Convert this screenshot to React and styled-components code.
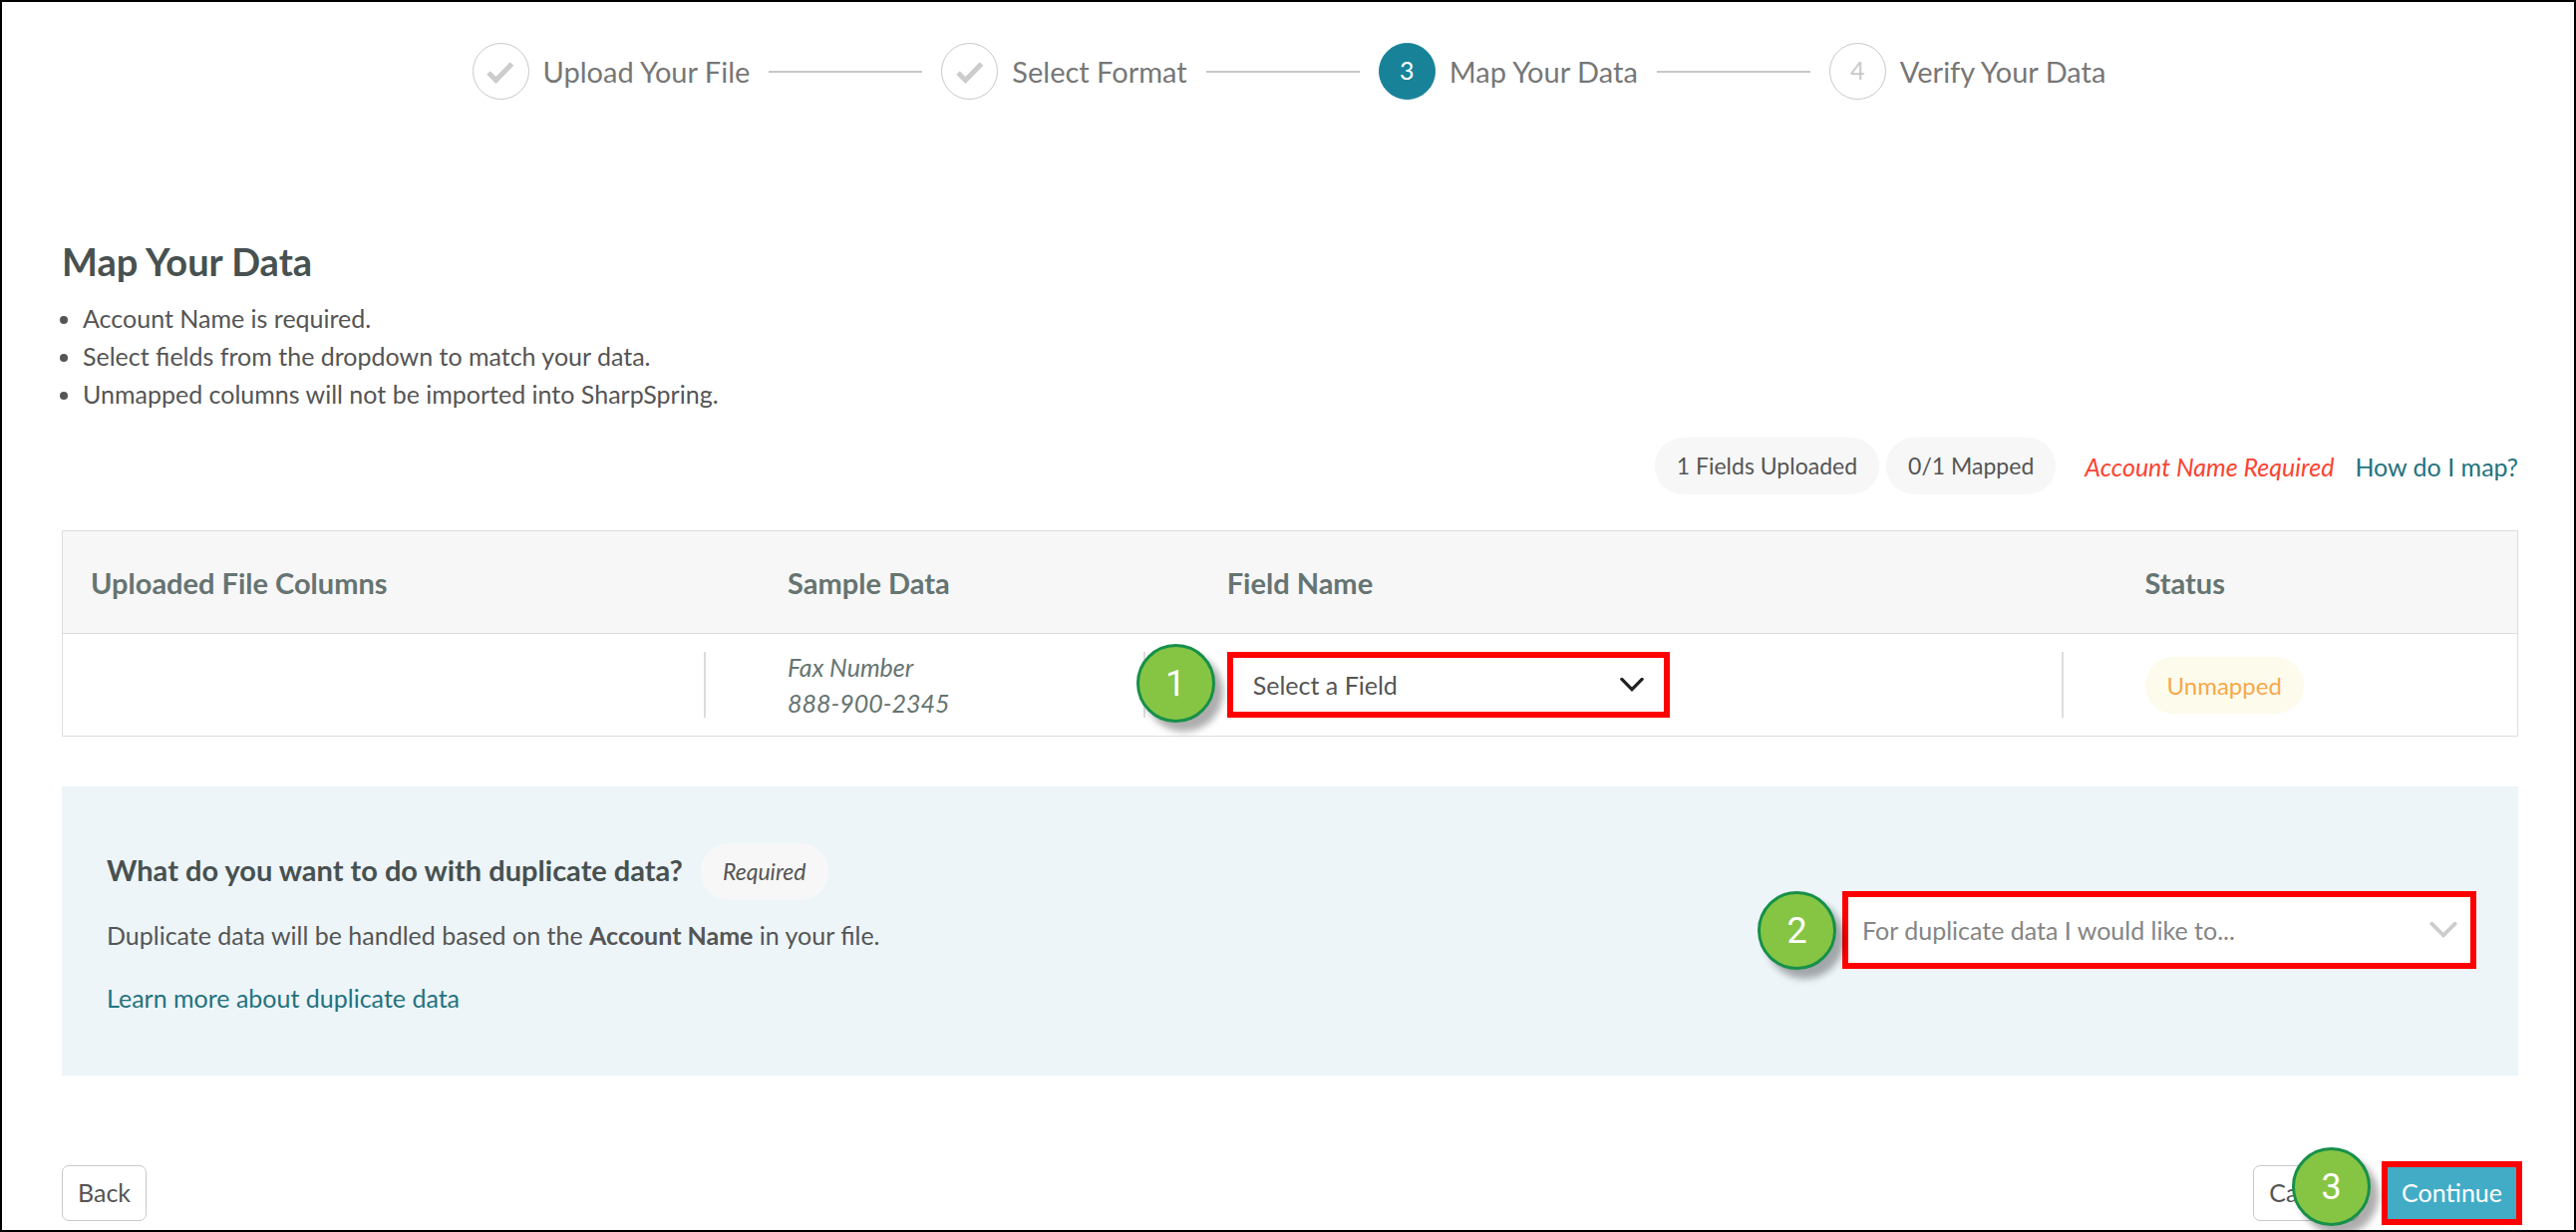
import React from 'react';
import styled, { createGlobalStyle } from 'styled-components';

const GlobalStyle = createGlobalStyle`
    *, *::before, *::after {
        box-sizing: border-box;
    }
    body {
        margin: 0;
        background: #fff;
        color: #555;
        font-family: Lato, 'Liberation Sans', sans-serif;
        font-size: 25px;
        line-height: 38px;
    }
    h1, h2, p, ul, ol {
        margin: 0;
        padding: 0;
    }
    button, select {
        font: inherit;
    }
`;

const Page = styled.div`
    min-height: 100vh;
    padding: 41px 56px 0 60px;
    border: 2px solid #000;
`;

const Stepper = styled.ol`
    display: flex;
    justify-content: center;
    align-items: center;
    gap: 19px;
    padding-right: 2px;
    list-style: none;
`;

const Step = styled.li`
    display: flex;
    align-items: center;
    gap: 14px;
    color: #777;
    font-size: 29px;
`;

const StepCircle = styled.span`
    display: flex;
    align-items: center;
    justify-content: center;
    width: 57px;
    height: 57px;
    padding-bottom: 4px;
    border: 1px solid ${(p) => (p.$active ? '#188398' : '#c9c9c9')};
    border-radius: 50%;
    background: ${(p) => (p.$active ? '#188398' : '#fff')};
    color: ${(p) => (p.$active ? '#fff' : '#c9c9c9')};
    font-size: 25px;

    svg {
        margin-top: 6px;
    }
`;

const StepLine = styled.li`
    width: 154px;
    height: 2px;
    background: #c8c8c8;
`;

const Title = styled.h1`
    margin-top: 137px;
    color: #475150;
    font-size: 38px;
    font-weight: 700;
    line-height: 50px;
`;

const Notes = styled.ul`
    margin-top: 13px;
    padding-left: 21px;
`;

const Summary = styled.div`
    display: flex;
    justify-content: flex-end;
    align-items: center;
    gap: 7px;
    margin-top: 25px;
`;

const Pill = styled.span`
    display: inline-block;
    padding: 0 22px;
    border-radius: 28px;
    background: ${(p) => (p.$warning ? '#fdfbec' : '#f7f7f7')};
    color: ${(p) => (p.$warning ? '#f6a94a' : '#555')};
    font-size: ${(p) => (p.$warning ? '24px' : '23px')};
    font-style: ${(p) => (p.$italic ? 'italic' : 'normal')};
    line-height: 57px;
`;

const RequiredNote = styled.em`
    margin: 0 14px 0 22px;
    color: #fa4432;
`;

const Link = styled.a`
    color: #24727f;
    text-decoration: none;
`;

const MapTable = styled.table`
    width: 100%;
    margin-top: 36px;
    border: 1px solid #dcdedd;
    border-spacing: 0;
    table-layout: fixed;
    color: #667472;
`;

const HeadCell = styled.th`
    width: ${(p) => p.$width};
    height: 103px;
    padding: 2px 0 0 ${(p) => (p.$first ? '28px' : '82px')};
    border-bottom: 1px solid #dcdedd;
    background: #f7f7f7;
    font-size: 29px;
    text-align: left;
`;

const Cell = styled.td`
    height: 102px;
    padding: 0;
`;

const CellBody = styled.div`
    display: flex;
    align-items: center;
    height: 66px;
    padding-left: 82px;
    border-right: ${(p) => (p.$last ? '0' : '2px solid #dcdcdc')};
    line-height: 36px;
`;

const SelectBox = styled.div`
    position: relative;
    width: ${(p) => p.$width};
    height: ${(p) => p.$height};
    border: 6px solid #f00;
    background: #fff;

    svg {
        position: absolute;
        top: 50%;
        right: ${(p) => p.$arrowRight};
        transform: translateY(-50%);
        pointer-events: none;
    }
`;

const Select = styled.select`
    width: 100%;
    height: 100%;
    padding: 0 50px 0 ${(p) => p.$indent};
    border: 0;
    background: transparent;
    color: ${(p) => (p.$muted ? '#858585' : '#555')};
    appearance: none;
`;

const Marker = styled.span`
    position: absolute;
    z-index: 1;
    top: ${(p) => p.$top};
    right: calc(100% + ${(p) => p.$gap});
    width: 79px;
    height: 79px;
    border: 3px solid #17904a;
    border-radius: 50%;
    background: #86c543;
    box-shadow: 8px 9px 7px rgba(0, 0, 0, 0.32);
    color: #fff;
    font-family: Roboto, sans-serif;
    font-size: 36px;
    line-height: 74px;
    text-align: center;
`;

const Duplicates = styled.section`
    display: flex;
    align-items: center;
    justify-content: space-between;
    margin-top: 50px;
    padding: 57px 42px 59px 45px;
    background: #edf5f9;
`;

const DuplicatesText = styled.div`
    display: flex;
    flex-direction: column;
    gap: 25px;
    color: #555;
`;

const Question = styled.div`
    display: flex;
    align-items: center;
    gap: 18px;
    margin-bottom: -9px;
`;

const QuestionTitle = styled.h2`
    padding-bottom: 4px;
    color: #475150;
    font-size: 29px;
`;

const Footer = styled.footer`
    display: flex;
    justify-content: space-between;
    margin-top: 90px;
    padding-bottom: 8px;
`;

const Actions = styled.div`
    display: flex;
    gap: 27px;
`;

const ContinueBox = styled.div`
    position: relative;
`;

const Button = styled.button`
    height: 56px;
    padding: 0 15px 2px;
    border: 1px solid #c9c9c9;
    border-radius: 7px;
    background: #fff;
    color: #555;
`;

const PrimaryButton = styled(Button)`
    border-color: #42acc6;
    border-radius: 0;
    background: #42acc6;
    color: #fff;
    outline: 6px solid #f00;
    outline-offset: -2px;
`;

function Check() {
    return (
        <svg width="28" height="22" viewBox="0 0 28 22" fill="none" aria-hidden="true">
            <path d="M2 11l7.500 7.500L25.500 2" stroke="#ccc" strokeWidth="5" />
        </svg>
    );
}

function Chevron({ width, height, color }) {
    return (
        <svg width={width} height={height} viewBox="0 0 26 16" fill="none" aria-hidden="true">
            <path d="M2 2l11 11L24 2" stroke={color} strokeWidth="3.5" strokeLinecap="round" />
        </svg>
    );
}

const steps = [
    { label: 'Upload Your File', done: true },
    { label: 'Select Format', done: true },
    { label: 'Map Your Data', active: true },
    { label: 'Verify Your Data' },
];

const columns = [
    { label: 'Uploaded File Columns', width: '26.2%' },
    { label: 'Sample Data', width: '17.9%' },
    { label: 'Field Name', width: '37.4%' },
    { label: 'Status', width: '18.5%' },
];

function Steps() {
    return (
        <Stepper>
            {steps.map((s, i) => (
                <React.Fragment key={s.label}>
                    {i > 0 && <StepLine aria-hidden="true" />}
                    <Step aria-current={s.active ? 'step' : undefined}>
                        <StepCircle $active={s.active}>{s.done ? <Check /> : i + 1}</StepCircle>
                        {s.label}
                    </Step>
                </React.Fragment>
            ))}
        </Stepper>
    );
}

function MappingTable() {
    return (
        <MapTable>
            <thead>
                <tr>
                    {columns.map((c, i) => (
                        <HeadCell key={c.label} $width={c.width} $first={i === 0}>
                            {c.label}
                        </HeadCell>
                    ))}
                </tr>
            </thead>
            <tbody>
                <tr>
                    <Cell>
                        <CellBody />
                    </Cell>
                    <Cell>
                        <CellBody>
                            <em>
                                Fax Number
                                <br />
                                888-900-2345
                            </em>
                        </CellBody>
                    </Cell>
                    <Cell>
                        <CellBody>
                            <SelectBox $width="444px" $height="66px" $arrowRight="20px">
                                <Marker $top="-14px" $gap="18px">1</Marker>
                                <Select $indent="20px" aria-label="Field name">
                                    <option>Select a Field</option>
                                </Select>
                                <Chevron width={24} height={15} color="#222" />
                            </SelectBox>
                        </CellBody>
                    </Cell>
                    <Cell>
                        <CellBody $last>
                            <Pill $warning>Unmapped</Pill>
                        </CellBody>
                    </Cell>
                </tr>
            </tbody>
        </MapTable>
    );
}

function DuplicateData() {
    return (
        <Duplicates>
            <DuplicatesText>
                <Question>
                    <QuestionTitle>What do you want to do with duplicate data?</QuestionTitle>
                    <Pill $italic>Required</Pill>
                </Question>
                <p>
                    Duplicate data will be handled based on the <b>Account Name</b> in your file.
                </p>
                <Link href="#duplicates">Learn more about duplicate data</Link>
            </DuplicatesText>
            <SelectBox $width="636px" $height="78px" $arrowRight="13px">
                <Marker $top="-6px" $gap="12px">2</Marker>
                <Select $indent="14px" $muted aria-label="Duplicate data handling">
                    <option>For duplicate data I would like to...</option>
                </Select>
                <Chevron width={28} height={17} color="#ccc" />
            </SelectBox>
        </Duplicates>
    );
}

export default function App() {
    return (
        <>
            <GlobalStyle />
            <Page>
                <Steps />
                <Title>Map Your Data</Title>
                <Notes>
                    <li>Account Name is required.</li>
                    <li>Select fields from the dropdown to match your data.</li>
                    <li>Unmapped columns will not be imported into SharpSpring.</li>
                </Notes>
                <Summary>
                    <Pill>1 Fields Uploaded</Pill>
                    <Pill>0/1 Mapped</Pill>
                    <RequiredNote>Account Name Required</RequiredNote>
                    <Link href="#help">How do I map?</Link>
                </Summary>
                <MappingTable />
                <DuplicateData />
                <Footer>
                    <Button type="button">Back</Button>
                    <Actions>
                        <Button type="button">Cancel</Button>
                        <ContinueBox>
                            <Marker $top="-18px" $gap="15px">3</Marker>
                            <PrimaryButton type="button">Continue</PrimaryButton>
                        </ContinueBox>
                    </Actions>
                </Footer>
            </Page>
        </>
    );
}
